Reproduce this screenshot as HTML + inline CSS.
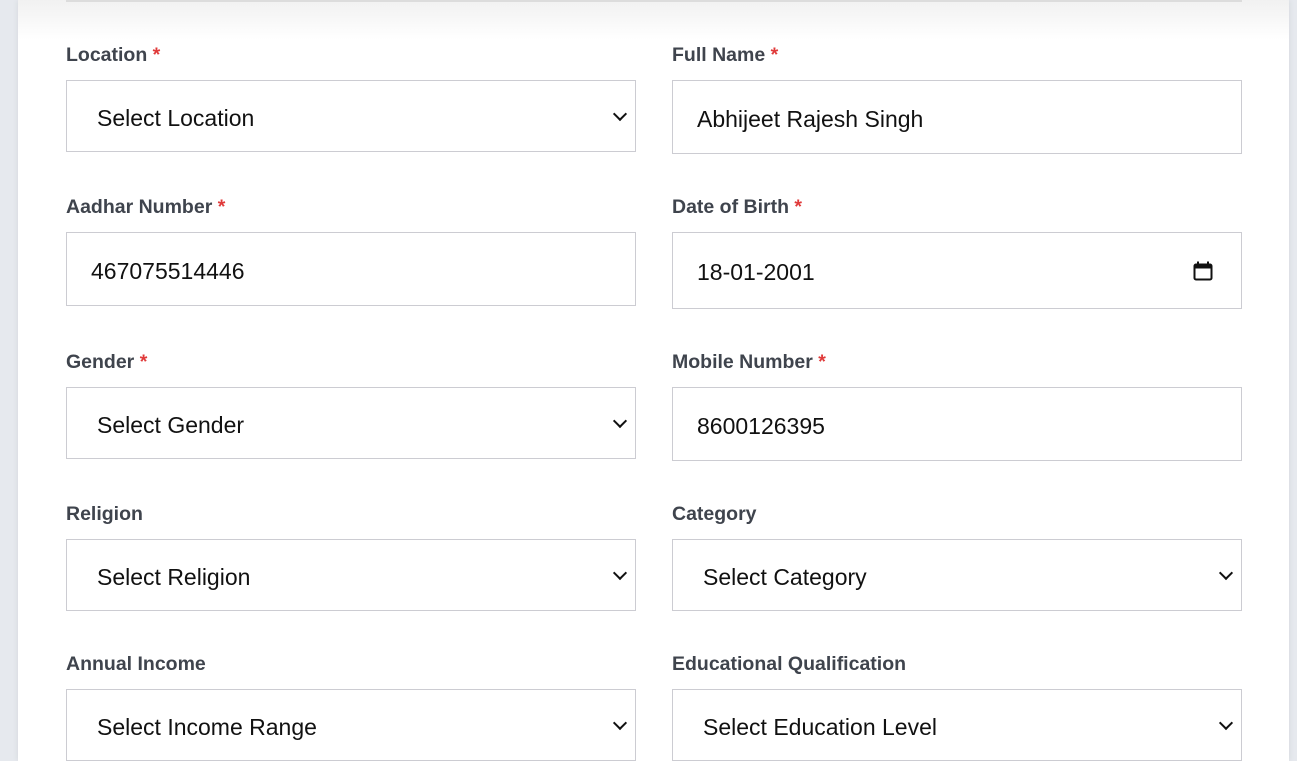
<!DOCTYPE html>
<html style="overflow:hidden;height:761px"><head><style>
body{margin:0;width:1297px;height:761px;overflow:hidden;background:#e6e9ee;font-family:"Liberation Sans",sans-serif;position:relative}
.card{position:absolute;left:18px;top:0;width:1271px;height:761px;background:#fff;box-shadow:0 0 6px rgba(0,0,0,.08)}
.topfade{position:absolute;left:18px;top:0;width:1271px;height:40px;background:linear-gradient(#f1f1f1,#fff)}
.hr{position:absolute;left:66px;top:0;width:1176px;height:2px;background:#dcdcdc}
.l{position:absolute;font-size:19.5px;font-weight:bold;color:#3f444d;line-height:24px}
.l b{color:#e03a3a;font-weight:bold}
.f{position:absolute;box-sizing:border-box;border:1px solid #ccccd2;width:570px;background:#fff;font-size:23px;color:#111;display:flex;align-items:center;padding-top:4px}
.s{padding-left:30px}
.i{padding-left:24px}
.s::after{content:"";position:absolute;right:10px;top:50%;width:8px;height:8px;border-right:2px solid #111;border-bottom:2px solid #111;transform:translateY(-70%) rotate(45deg)}
</style></head><body>
<div class="card"></div><div class="topfade"></div><div class="hr"></div>

<div class="l" style="left:66px;top:43px">Location <b>*</b></div>
<div class="f s" style="left:66px;top:80px;height:72px">Select Location</div>
<div class="l" style="left:672px;top:43px">Full Name <b>*</b></div>
<div class="f i" style="left:672px;top:80px;height:74px">Abhijeet Rajesh Singh</div>

<div class="l" style="left:66px;top:195px">Aadhar Number <b>*</b></div>
<div class="f i" style="left:66px;top:232px;height:74px">467075514446</div>
<div class="l" style="left:672px;top:195px">Date of Birth <b>*</b></div>
<div class="f i" style="left:672px;top:232px;height:77px">18-01-2001
<svg style="position:absolute;left:519px;top:27px" width="22" height="22" viewBox="0 0 22 22"><rect x="2.5" y="4.5" width="17" height="15" rx="1.5" fill="none" stroke="#111" stroke-width="2"/><rect x="2.5" y="4.5" width="17" height="4" fill="#111"/><rect x="5" y="1.5" width="2" height="4" fill="#111"/><rect x="15" y="1.5" width="2" height="4" fill="#111"/></svg></div>

<div class="l" style="left:66px;top:350px">Gender <b>*</b></div>
<div class="f s" style="left:66px;top:387px;height:72px">Select Gender</div>
<div class="l" style="left:672px;top:350px">Mobile Number <b>*</b></div>
<div class="f i" style="left:672px;top:387px;height:74px">8600126395</div>

<div class="l" style="left:66px;top:502px">Religion</div>
<div class="f s" style="left:66px;top:539px;height:72px">Select Religion</div>
<div class="l" style="left:672px;top:502px">Category</div>
<div class="f s" style="left:672px;top:539px;height:72px">Select Category</div>

<div class="l" style="left:66px;top:652px">Annual Income</div>
<div class="f s" style="left:66px;top:689px;height:72px">Select Income Range</div>
<div class="l" style="left:672px;top:652px">Educational Qualification</div>
<div class="f s" style="left:672px;top:689px;height:72px">Select Education Level</div>
</body></html>
